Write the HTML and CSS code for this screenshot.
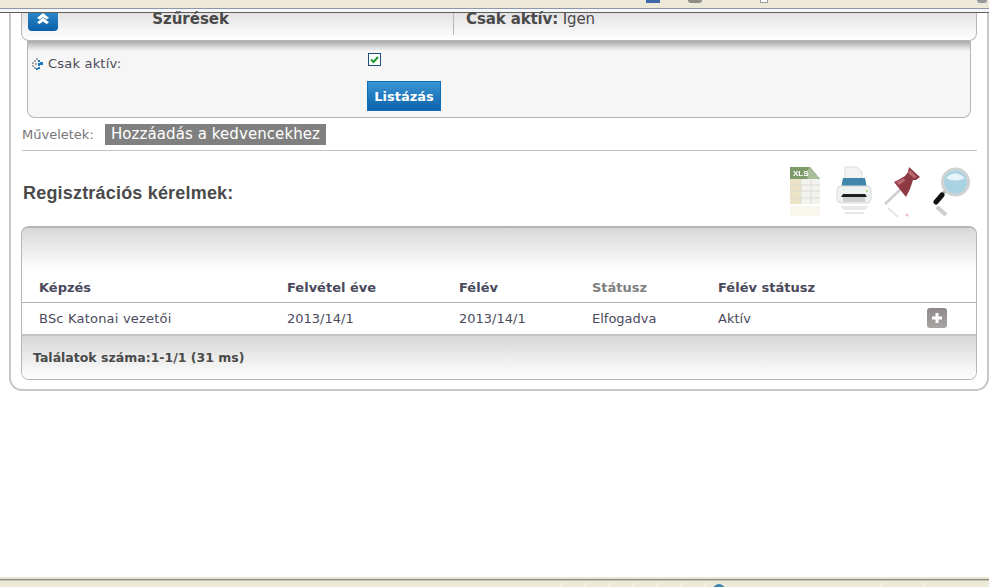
FILE: index.html
```html
<!DOCTYPE html>
<html lang="hu">
<head>
<meta charset="utf-8">
<title>Regisztrációs kérelmek</title>
<link rel="stylesheet" href="styles.css">
</head>
<body>
<div class="page">
  <div class="chrome-top">
    <div class="chrome-icons">
      <span class="ci ci-blue"></span><span class="ci ci-grey"></span><span class="ci ci-white"></span><span class="ci ci-end"></span>
    </div>
  </div>
  <div class="scroll">
    <main class="panel">
      <section class="filter-head">
        <button class="collapse" type="button" aria-label="Összecsuk">
          <svg width="14" height="11" viewBox="0 0 14 11"><path d="M1 5 7 0l6 5-2.500 1.500L7 4 3.500 6.500zM1 9.500 7 4.500l6 5-2.500 1.500L7 8.500 3.500 11z" fill="#fff"/></svg>
        </button>
        <div class="fh-title">Szűrések</div>
        <div class="fh-state"><b>Csak aktív:</b> Igen</div>
      </section>
      <section class="filter-body">
        <div class="fb-labels">
          <svg class="bullet" width="12" height="12" viewBox="0 0 12 12"><path d="M5 0h2v2H5zM3 2h2v2H3zM1 4h2v2H1zM1 7h2v2H1zM3 9h2v2H3zM4 5h2v2H4z" fill="#a4a8ac"/><path d="M7 2h2v2H7zM9 4h3v3H9zM7 9h2v2H7zM5 10h2v2H5zM7 5h2v3H7z" fill="#1f78bd"/></svg>
          <span>Csak aktív:</span>
        </div>
        <div class="fb-controls">
          <span class="check"><svg width="11" height="11" viewBox="0 0 11 11"><path d="M2 5.500 4.500 8 9 3" fill="none" stroke="#1f9a2e" stroke-width="2"/></svg></span>
          <button class="list-btn" type="button">Listázás</button>
        </div>
      </section>
      <div class="actions">
        <span class="actions-label">Műveletek:</span>
        <a class="fav">Hozzáadás a kedvencekhez</a>
      </div>
      <div class="title-row">
        <h1>Regisztrációs kérelmek:</h1>
        <div class="tools">
          <svg width="36" height="52" viewBox="0 0 36 52"><path d="M1 2h20l10 12v25H1z" fill="#f2f2ee"/><path d="M1 2h20l10 12H1z" fill="#7d9a6a"/><path d="M17 8l4-6 10 12H19z" fill="#a9bd98"/><path d="M1 14h11v25H1z" fill="#ece3c6"/><path d="M1 20h30M1 26h30M1 33h30M12 14v25M22 14v25" stroke="#dedcd4"/><text x="4" y="11" class="xls">XLS</text><path d="M1 41h30v10H1z" fill="#f4f0de" opacity=".55"/></svg>
          <svg width="37" height="52" viewBox="0 0 37 52"><path d="M9 2h12l5 5v8H9z" fill="#f3f3f3" stroke="#dcdcdc"/><path d="M7 13h22l2 10H5z" fill="#3f86aa"/><path d="M1 25q0-4 4-4h26q4 0 4 4v9q0 4-4 4H5q-4 0-4-4z" fill="#eef2f1" stroke="#dadada"/><path d="M7 29h22l2 3H5z" fill="#1e1e1e"/><path d="M7 32h22v5H7z" fill="#cfd2d2"/><circle cx="31" cy="26" r="1" fill="#b5cc66"/><path d="M4 41h29l-4 4H8z" fill="#e0e0e0" opacity=".7"/><path d="M9 48h19" stroke="#e6e6e6" stroke-width="2"/></svg>
          <svg width="38" height="52" viewBox="0 0 38 52"><path d="M1 39 18 23" stroke="#cfcfcf" stroke-width="2.500"/><path d="M25 2 36 12l-4 3-3 0-3 9-4 8-12-15 4-2 7-4 3-4z" fill="#8f3a42"/><path d="M26 5l7 7-3 1-6-5zM12 17l8-4 1 3-6 4z" fill="#b96a70"/><path d="M4 43 14 52" stroke="#e4e4e4" stroke-width="2"/><circle cx="23" cy="50" r="1.500" fill="#ecc0c2"/></svg>
          <svg width="38" height="52" viewBox="0 0 38 52"><path d="M9 29 14 25" stroke="#aaa" stroke-width="3"/><path d="M3 37 9 30" stroke="#111" stroke-width="5" stroke-linecap="round"/><circle cx="22.500" cy="17" r="13" fill="#a9d3e2" stroke="#cfd3d4" stroke-width="3"/><path d="M13 13q9-9 19 0-9 5-19 0z" fill="#e7f4f9"/><path d="M4 42l9 8" stroke="#999" stroke-width="4" opacity=".5"/></svg>
        </div>
      </div>
      <section class="grid">
        <div class="grid-top"></div>
        <table>
          <thead>
            <tr><th class="c1">Képzés</th><th class="c2">Felvétel éve</th><th class="c3">Félév</th><th class="c4 muted">Státusz</th><th class="c5">Félév státusz</th><th class="c6"></th></tr>
          </thead>
          <tbody>
            <tr><td class="name">BSc Katonai vezetői</td><td>2013/14/1</td><td>2013/14/1</td><td>Elfogadva</td><td>Aktív</td><td><span class="more"><svg width="10" height="10" viewBox="0 0 10 10"><path d="M3.500 0h3v3.500H10v3H6.500V10h-3V6.500H0v-3h3.500z" fill="#fff"/></svg></span></td></tr>
          </tbody>
        </table>
        <div class="grid-foot">Találatok száma:1-1/1 (31 ms)</div>
      </section>
    </main>
  </div>
  <div class="chrome-bottom">
    <div class="status-cells">
      <span class="sc"></span><span class="sc"></span><span class="sc"></span><span class="sc"></span><span class="sc"></span><span class="sc"></span><span class="sc sc-globe"><i class="globe"></i></span><span class="sc sc-mid"></span><span class="sc sc-last"></span>
    </div>
  </div>
</div>
</body>
</html>
```
FILE: styles.css
```css
* { box-sizing: border-box; }
html, body { margin: 0; padding: 0; background: #fff; }
body { font-family: "DejaVu Sans", Verdana, sans-serif; font-size: 13px; color: #4a4a55; overflow: hidden; }
.page { width: 989px; height: 587px; display: flex; flex-direction: column; overflow: hidden; }

.chrome-top { height: 13px; flex: none; background: linear-gradient(#ece9d8 0 8px, #8f97a8 8px 9px, #f4f6fa 9px 12px, #5f5f58 12px); overflow: hidden; }
.chrome-icons { display: flex; height: 3px; padding-left: 646px; }
.ci { display: block; height: 3px; }
.ci-blue { width: 14px; background: #3c68a8; margin-right: 28px; }
.ci-grey { width: 14px; background: #8e8e86; border-radius: 0 0 6px 6px; margin-right: 58px; }
.ci-white { width: 8px; background: #fff; border: 1px solid #999; border-top: 0; margin-right: 209px; }
.ci-end { width: 10px; background: #999; border-radius: 0 0 5px 5px; }

.scroll { flex: 1; min-height: 0; }
.panel { margin-left: 9px; width: 980px; height: 378px; border: solid #c8c6c6; border-width: 0 2px 2px; border-radius: 0 0 13px 13px; padding: 0 10px; }

.filter-head { height: 28px; width: 956px; display: flex; background: linear-gradient(#e3e3e3, #fff); border: solid #b5b5b5; border-width: 0 1px 1px; border-radius: 0 0 8px 8px; color: #4a4a4a; }
.collapse { flex: none; width: 30px; height: 18px; margin: 0 0 0 6px; padding: 0; border: 0; border-radius: 0 0 4px 4px; background: linear-gradient(#2a86c8, #0a5fa8); display: flex; align-items: flex-start; justify-content: center; }
.collapse svg { display: block; }
.fh-title { width: 396px; margin-bottom: 5px; border-right: 1px solid #b8b8b8; text-align: right; padding-right: 224px; font-weight: bold; font-size: 15px; line-height: 13px; white-space: nowrap; }
.fh-state { padding-left: 12px; font-size: 15px; line-height: 13px; letter-spacing: -.12px; white-space: nowrap; }

.filter-body { width: 944px; height: 77px; margin-left: 6px; display: flex; background: linear-gradient(#a9a9a9, #f6f6f6 10px); border: solid #b5b5b5; border-width: 0 1px 1px; border-radius: 0 0 8px 8px; }
.fb-labels { width: 340px; display: flex; align-items: flex-start; gap: 5px; padding: 15px 0 0 3px; font-size: 13px; letter-spacing: .2px; }
.bullet { margin-top: 2px; flex: none; }
.fb-controls { display: flex; flex-direction: column; align-items: flex-start; }
.check { width: 13px; height: 13px; margin: 12px 0 0; background: #fff; border: 1px solid #1d4f7c; display: flex; }
.list-btn { width: 74px; height: 30px; margin-top: 15px; margin-left: -1px; background: linear-gradient(#3a94d2, #0b62ad); border: 1px solid #1170b5; color: #fff; font: bold 13px "DejaVu Sans", Verdana, sans-serif; padding: 0; }

.actions { height: 33px; display: flex; align-items: flex-start; width: 955px; margin-left: 1px; padding-top: 6px; border-bottom: 1px solid #c6c2c2; }
.actions-label { color: #777; font-size: 13px; line-height: 21px; width: 83px; }
.fav { background: #808080; color: #fff; font-size: 15px; letter-spacing: .08px; line-height: 21px; height: 21px; padding: 0 6px; width: 221px; white-space: nowrap; }

.title-row { height: 75px; display: flex; justify-content: space-between; align-items: flex-start; padding: 14px 0 0 2px; width: 954px; }
h1 { margin: 17px 0 0; font: bold 18px/22px "Liberation Sans", Arial, sans-serif; letter-spacing: .19px; color: #4a4a4a; }
.tools { display: flex; gap: 11px; padding-right: 4px; }
.tools svg { display: block; filter: blur(.4px); }
.xls { font: bold 8px "Liberation Sans", sans-serif; fill: #fff; }

.grid { width: 956px; height: 154px; border: 1px solid #b5b5b5; border-top-width: 2px; border-radius: 8px; overflow: hidden; }
.grid-top { height: 42px; background: linear-gradient(#d8d8d8, #fff); }
table { width: 100%; border-collapse: collapse; table-layout: fixed; font-size: 13px; }
th { height: 32px; text-align: left; padding: 3px 0 0 17px; color: #4a4a5c; font-weight: bold; border-bottom: 1px solid #b5b5b5; }
td { height: 33px; padding: 0 0 0 17px; color: #4a4a5c; border-bottom: 2px solid #c4c4c4; white-space: nowrap; }
.c1 { width: 248px; } .c2 { width: 172px; } .c3 { width: 133px; } .c4 { width: 126px; } .c5 { width: 209px; }
th.muted { color: #808080; }
td.name { letter-spacing: .2px; }
.more { display: flex; align-items: center; justify-content: center; width: 20px; height: 20px; border-radius: 3px; background: linear-gradient(#8e8888, #aaa6a6); }
.grid-foot { height: 44px; padding: 0 0 0 11px; line-height: 44px; font-size: 12.500px; font-weight: bold; color: #4a4a4a; background: linear-gradient(#d8d8d8, #fff); }

.chrome-bottom { height: 10px; flex: none; background: linear-gradient(#e9e6d4 0 2px, #8a8a80 2px 3px, #c8c6b6 3px 4px, #ece9d8 4px); overflow: hidden; }
.status-cells { display: flex; height: 4px; margin-top: 6px; padding-left: 561px; }
.sc { width: 24px; border-left: 1px solid #fff; }
.sc-globe { width: 176px; padding-left: 7px; }
.globe { display: block; width: 12px; height: 12px; border-radius: 50%; margin-top: 1px; background: linear-gradient(#3f7fc0, #3d9a5e); }
.sc-mid { width: 43px; }
.sc-last { width: 60px; }
```
